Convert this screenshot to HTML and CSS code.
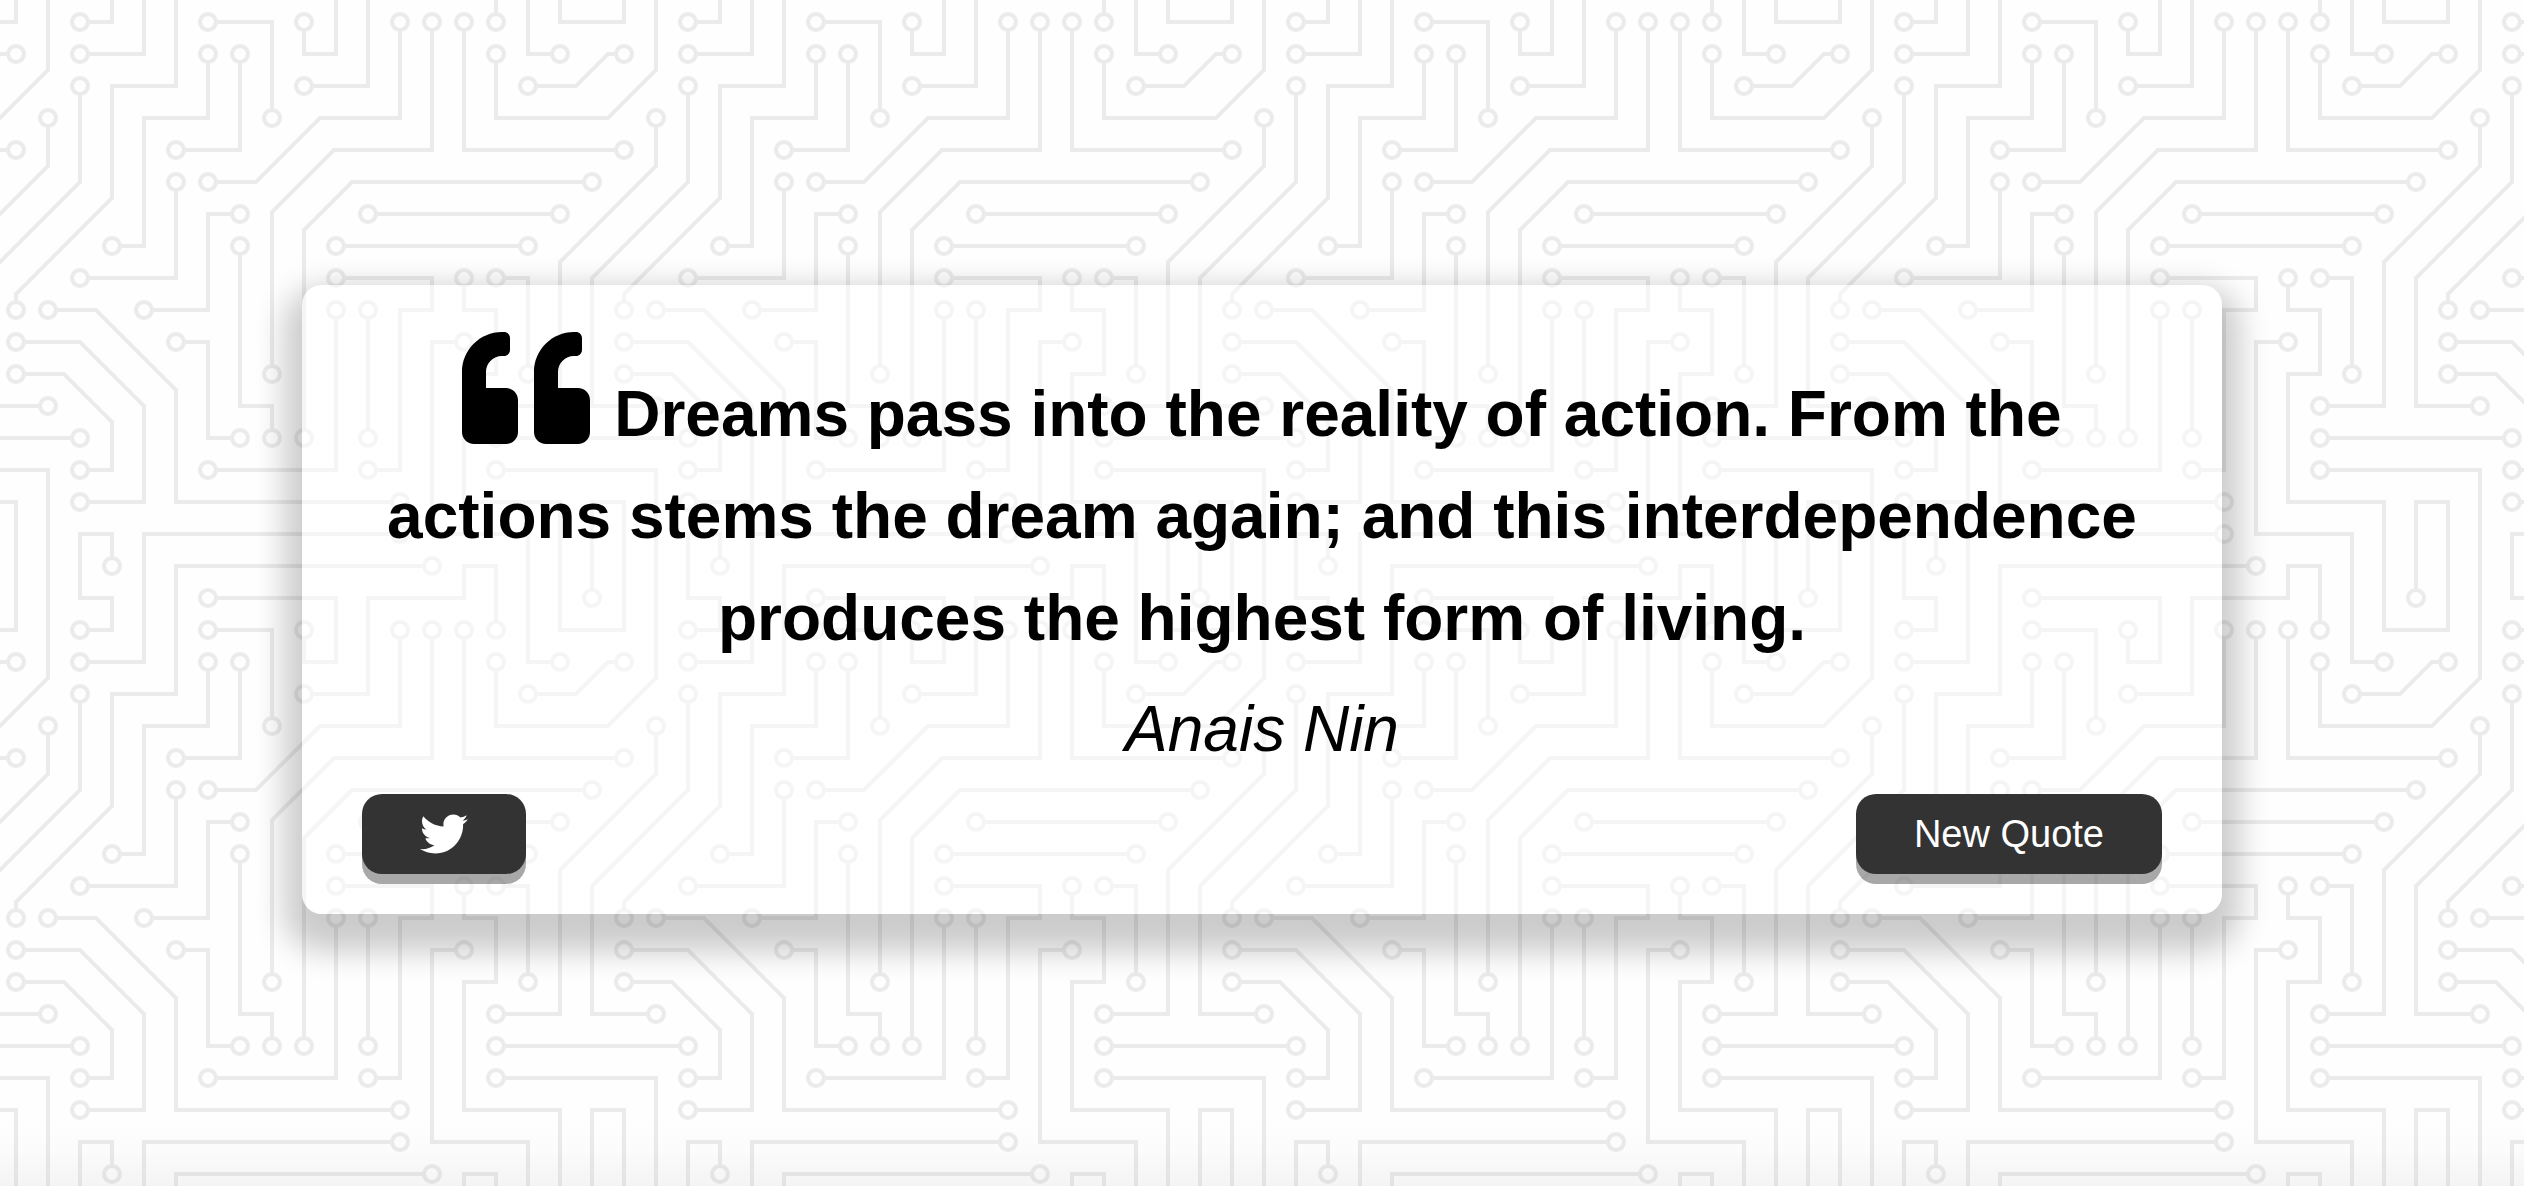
FILE: index.html
```html
<!DOCTYPE html>
<html lang="en">
<head>
<meta charset="utf-8">
<title>Random Quote Machine</title>
<meta name="viewport" content="width=device-width, initial-scale=1">
<link rel="stylesheet" href="styles.css">
</head>
<body>
<main class="quote-box">
  <blockquote class="quote">
    <svg class="quote-mark" viewBox="0 0 512 512" aria-hidden="true"><path fill="currentColor" d="M464 256h-80v-64c0-35.300 28.700-64 64-64h8c13.300 0 24-10.700 24-24V56c0-13.300-10.700-24-24-24h-8c-88.400 0-160 71.600-160 160v240c0 26.500 21.500 48 48 48h128c26.500 0 48-21.500 48-48V304c0-26.500-21.500-48-48-48zm-288 0H96v-64c0-35.300 28.700-64 64-64h8c13.300 0 24-10.700 24-24V56c0-13.300-10.700-24-24-24h-8C71.600 32 0 103.600 0 192v240c0 26.500 21.500 48 48 48h128c26.500 0 48-21.500 48-48V304c0-26.500-21.500-48-48-48z"/></svg>
    Dreams pass into the reality of action. From the actions stems the dream again; and this interdependence produces the highest form of living.
  </blockquote>
  <p class="author">Anais Nin</p>
  <div class="actions">
    <button class="button" type="button" aria-label="Tweet this quote">
      <svg class="twitter" viewBox="0 0 512 512" aria-hidden="true"><path fill="currentColor" d="M459.370 151.716c.325 4.548.325 9.097.325 13.645 0 138.720-105.583 298.558-298.558 298.558-59.452 0-114.680-17.219-161.137-47.106 8.447.974 16.568 1.299 25.340 1.299 49.055 0 94.213-16.568 130.274-44.832-46.132-.975-84.792-31.188-98.112-72.772 6.498.974 12.995 1.624 19.818 1.624 9.421 0 18.843-1.300 27.614-3.573-48.081-9.747-84.143-51.980-84.143-102.985v-1.299c13.969 7.797 30.214 12.670 47.431 13.319-28.264-18.843-46.781-51.005-46.781-87.391 0-19.492 5.197-37.360 14.294-52.954 51.655 63.675 129.300 105.258 216.365 109.807-1.624-7.797-2.599-15.918-2.599-24.040 0-57.828 46.782-104.934 104.934-104.934 30.213 0 57.502 12.670 76.670 33.137 23.715-4.548 46.456-13.320 66.599-25.340-7.798 24.366-24.366 44.833-46.132 57.827 21.117-2.273 41.584-8.122 60.426-16.243-14.292 20.791-32.161 39.308-52.628 54.253z"/></svg>
    </button>
    <button class="button" type="button">New Quote</button>
  </div>
</main>
</body>
</html>
```
FILE: styles.css
```css
* {
  box-sizing: border-box;
}

body {
  margin: 0;
  min-height: 100vh;
  padding: 12px 32px 0;
  display: flex;
  align-items: center;
  justify-content: center;
  font-family: "Liberation Sans", Arial, sans-serif;
  color: #000;
  background-color: #fefefe;
  background-image:
    linear-gradient(to top, rgba(0, 0, 0, 0.04), rgba(0, 0, 0, 0.01) 36px, transparent 64px),
    url("data:image/svg+xml,%3Csvg xmlns='http://www.w3.org/2000/svg' viewBox='0 0 304 304' width='608' height='608'%3E%3Cdefs%3E%3Cpath id='n' d='M49 225h0M209 273h0M257 225h0M257 241h0M177 129h0M273 129h0M17 81h0M193 113h0M289 113h0M257 17h0M193 225h0M193 161h0M241 17h0M257 33h0M129 129h0M145 225h0M129 113h0M81 161h0M113 241h0M177 161h0M97 177h0M129 225h0M65 289h0M241 177h0M257 145h0M273 193h0M193 241h0M177 145h0M289 33h0M97 97h0M49 145h0M49 33h0M113 33h0M65 129h0M97 81h0M129 33h0M113 17h0M145 65h0M225 289h0M241 145h0M49 17h0M161 49h0M113 1h0M113 305h0M161 17h0M113 97h0M209 17h0M145 193h0M225 17h0M161 225h0M305 97h0M1 97h0M17 161h0M49 49h0M33 209h0M33 65h0M17 33h0M273 49h0M257 209h0M49 241h0M17 193h0M209 257h0M33 161h0M49 257h0M17 177h0M1 1h0M305 1h0M1 305h0M305 305h0'/%3E%3C/defs%3E%3Cg fill='none' stroke='%23ebebeb' stroke-width='2'%3E%3Cpath d='M0 225H49M81 273H209M257 225H304M257 241H304M177 129H273M0 81H17M193 113H289M257 17V0M193 225V161M241 17V81H304M257 33V65H304M129 129V209H145V225M129 113H113V161H81M113 241H177V161M97 177H113V225H129M65 289V273H49V304M241 177H225V273H273V304M257 145H273V193M193 241H209V161H225V145H177M289 33H273V0M97 97V145H49M49 33H81V0M113 33V65H81V129H65M97 81H129V33M113 17H145V65M225 289H97V304M241 145V161H257V193H241V257H289V304M49 17H65V1H49V0M161 49H193V1H241V0M113 1H177V33H161V17M113 97H137L169 65H209V17M145 193V112L176 81H225V17M161 225V121L185 97H305M17 161V153L65 105V49H97V0M49 49V97L1 145V209H33M33 65V89L-1 123M17 33H9L-1 43M273 49H297L305 41M257 209H289V137L305 121M49 241H65V217L41 193H17M209 257H97V201L57 161H33M49 257H81V209L49 177H17M33 0V41L9 65H0M17 304V257H1V305M33 304V241H0M0 17H17V0M304 17H289V0M257 304V289H241V304M81 272V304'/%3E%3C/g%3E%3Cg fill='none' stroke-linecap='round'%3E%3Cuse href='%23n' stroke='%23ebebeb' stroke-width='10'/%3E%3Cuse href='%23n' stroke='%23fefefe' stroke-width='6'/%3E%3C/g%3E%3C/svg%3E");
  background-position: 0 0, -18px -12px;
  background-repeat: no-repeat, repeat;
}

.quote-box {
  width: 100%;
  max-width: 1920px;
  padding: 39px 60px 40px;
  border-radius: 20px;
  background: rgba(255, 255, 255, 0.5);
  box-shadow: 0 20px 30px 18px rgba(0, 0, 0, 0.2);
  text-align: center;
}

.quote {
  margin: 0 0 9px;
  font-size: 64px;
  line-height: 102px;
  font-weight: 700;
}

.quote-mark {
  width: 128px;
  height: 128px;
  margin-right: 6px;
  vertical-align: -16px;
}

.author {
  margin: 0;
  font-size: 64px;
  line-height: 102px;
  font-style: italic;
}

.actions {
  display: flex;
  justify-content: space-between;
  align-items: center;
  margin-top: 14px;
}

.button {
  height: 80px;
  padding: 0 58px;
  border: 0;
  border-radius: 20px;
  background: #333;
  box-shadow: 0 10px 0 rgba(0, 0, 0, 0.34);
  color: #fff;
  font-family: inherit;
  font-size: 38px;
  line-height: 80px;
  cursor: pointer;
}

.twitter {
  display: block;
  width: 48px;
  height: 48px;
}
```
